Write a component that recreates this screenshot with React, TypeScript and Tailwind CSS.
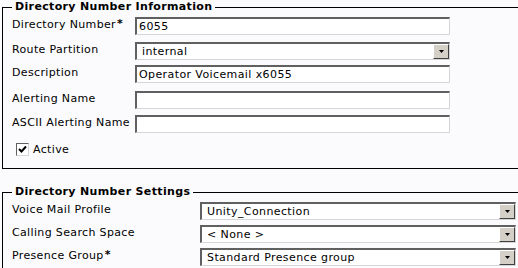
import { ReactNode } from "react";

const font = "font-['DejaVu_Sans','Verdana',sans-serif]";

function Req() {
    return <sup className="text-[11px] font-bold relative -top-[1px] ml-[1px]">*</sup>;
}

function DropArrow() {
    return (
        <span className="flex h-[15px] w-[16px] shrink-0 items-center justify-center self-start bg-[#d4d0c8] border border-t-white border-l-white border-r-[#404040] border-b-[#404040]">
            <svg width="5" height="3" viewBox="0 0 5 3">
                <path d="M0 0h5L2.5 3z" fill="#000" />
            </svg>
        </span>
    );
}

function Field({ value = "", select = false, w }: { value?: string; select?: boolean; w: string }) {
    return (
        <div
            className={`${w} flex h-[18px] items-start bg-white border-t-2 border-l-2 border-r border-b border-t-[#606060] border-l-[#606060] border-r-[#d6d6d6] border-b-[#d6d6d6]`}
        >
            <span className={`flex-1 truncate text-[11px] leading-[15px] tracking-[0.4px] text-black ${select ? "pl-[5px]" : "pl-[2px]"}`}>
                {value}
            </span>
            {select && <DropArrow />}
        </div>
    );
}

function Row({ label, lw, mt, children }: { label: ReactNode; lw: string; mt: string; children: ReactNode }) {
    return (
        <div className={`flex items-start ${mt}`}>
            <div className={`${lw} shrink-0 text-[11px] leading-[13px] tracking-[0.35px] pt-[1px] text-black`}>{label}</div>
            {children}
        </div>
    );
}

export default function App() {
    return (
        <div className={`${font} h-[268px] w-[518px] overflow-hidden bg-[#fbfbfd] pl-[2px]`}>
            <fieldset className="border border-r-0 border-black pl-[9px] h-[169px]">
                <legend className="px-[3px] text-[11px] font-bold leading-[14px] tracking-[0.35px] text-black">
                    Directory Number Information
                </legend>
                <Row lw="w-[123px]" mt="mt-[3px]" label={<>Directory Number<Req /></>}>
                    <Field w="w-[315px]" value="6055" />
                </Row>
                <Row lw="w-[123px]" mt="mt-[7px]" label="Route Partition">
                    <Field w="w-[315px]" value="internal" select />
                </Row>
                <Row lw="w-[123px]" mt="mt-[5px]" label="Description">
                    <Field w="w-[315px]" value="Operator Voicemail x6055" />
                </Row>
                <Row lw="w-[123px]" mt="mt-[8px]" label="Alerting Name">
                    <Field w="w-[315px]" />
                </Row>
                <Row lw="w-[123px]" mt="mt-[6px]" label="ASCII Alerting Name">
                    <Field w="w-[315px]" />
                </Row>
                <label className="mt-[10px] ml-[4px] flex items-center gap-[4px] text-[11px] leading-[13px] tracking-[0.35px] text-black">
                    <span className="flex h-[13px] w-[13px] items-center justify-center bg-white border border-t-[#606060] border-l-[#606060] border-r-[#d6d6d6] border-b-[#d6d6d6]">
                        <svg width="9" height="9" viewBox="0 0 9 9">
                            <path d="M1 4l2.5 2.5L8 1.5" stroke="#000" strokeWidth="2" fill="none" />
                        </svg>
                    </span>
                    Active
                </label>
            </fieldset>

            <fieldset className="mt-[16px] border border-r-0 border-b-0 border-black pl-[9px] h-[100px]">
                <legend className="px-[3px] text-[11px] font-bold leading-[14px] tracking-[0.35px] text-black">
                    Directory Number Settings
                </legend>
                <Row lw="w-[188px]" mt="mt-[3px]" label="Voice Mail Profile">
                    <Field w="w-[316px]" value="Unity_Connection" select />
                </Row>
                <Row lw="w-[188px]" mt="mt-[5px]" label="Calling Search Space">
                    <Field w="w-[316px]" value="< None >" select />
                </Row>
                <Row lw="w-[188px]" mt="mt-[5px]" label={<>Presence Group<Req /></>}>
                    <Field w="w-[316px]" value="Standard Presence group" select />
                </Row>
            </fieldset>
        </div>
    );
}
